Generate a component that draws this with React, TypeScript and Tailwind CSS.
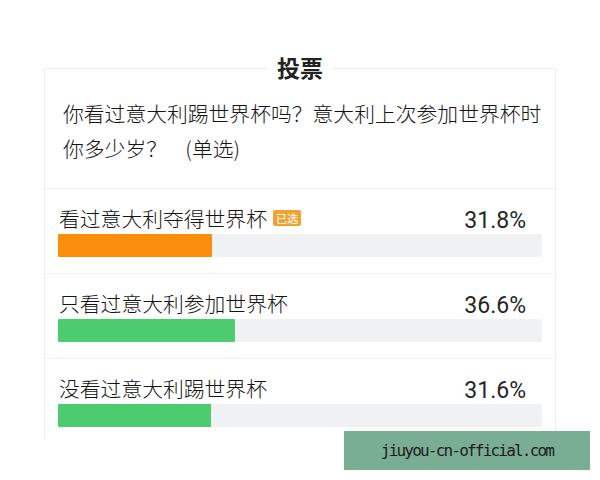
const options = [
  { label: "看过意大利夺得世界杯", pct: 31.8, color: "bg-[#fb8d0d]", picked: true },
  { label: "只看过意大利参加世界杯", pct: 36.6, color: "bg-[#4ccb6f]", picked: false },
  { label: "没看过意大利踢世界杯", pct: 31.6, color: "bg-[#4ccb6f]", picked: false },
];

const cjk = "font-['Noto_Sans_CJK_SC',sans-serif]";

const App = () => {
  return (
    <div className={`relative w-[600px] h-[480px] bg-white overflow-hidden pt-[52px] ${cjk}`}>
      <div className="relative z-10 flex justify-center">
        <span className="bg-white px-[10px] text-[23px] leading-[30px] font-bold text-[#222]">
          投票
        </span>
      </div>

      <div className="-mt-[14px] ml-[44px] w-[512px] h-[372px] overflow-hidden border-x border-t border-[#eeeeee]">
        <div className="pl-[18px] pr-[8px] pt-[27px] pb-[22px] text-[20.8px] leading-[35px] font-light text-[#141414]">
          你看过意大利踢世界杯吗？意大利上次参加世界杯时
          <br />
          你多少岁？&nbsp; &nbsp; (单选)
        </div>

        {options.map((o) => (
          <div key={o.label} className="border-t border-[#f0f0f0] px-[13px] pt-[15px] pb-[16px]">
            <div className="flex items-center justify-between h-[28px]">
              <div className="flex items-center gap-[6px] pl-[1px]">
                <span className="text-[20.8px] leading-[28px] font-light text-[#141414]">{o.label}</span>
                {o.picked && (
                  <span className="h-[16px] px-[3px] bg-[#f0a233] text-white text-[11px] leading-[16px] rounded-[2px]">
                    已选
                  </span>
                )}
              </div>
              <span className="pr-[16px] pt-[5px] font-['Roboto',sans-serif] text-[23px] leading-[28px] text-[#262626]">
                {o.pct}%
              </span>
            </div>
            <div className="mt-[2px] h-[23px] bg-[#f0f1f3] rounded-[1px]">
              <div className={`h-full rounded-[1px] ${o.color}`} style={{ width: `${o.pct}%` }} />
            </div>
          </div>
        ))}
      </div>

      <div className="absolute left-[344px] top-[431px] w-[246px] h-[39px] bg-[#7aae94] flex items-center justify-center">
        <span className="font-['DejaVu_Sans_Mono',monospace] text-[16px] tracking-[-1.8px] text-[#1c1c1c]">
          jiuyou-cn-official.com
        </span>
      </div>
    </div>
  );
};

export default App;
